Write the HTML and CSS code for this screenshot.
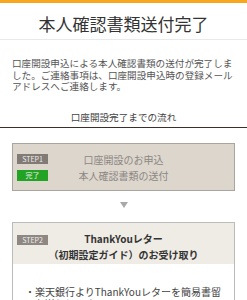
FILE: index.html
```html
<!DOCTYPE html>
<html lang="ja">
<head>
    <meta charset="UTF-8">
    <meta name="viewport" content="width=device-width, initial-scale=1.0">
    <title>本人確認書類送付完了</title>
    <link rel="stylesheet" href="styles.css">
</head>
<body>

<div class="topbar"></div>

<div class="header">
    <h1>本人確認書類送付完了</h1>
</div>

<p class="intro">口座開設申込による本人確認書類の送付が完了しました。ご連絡事項は、口座開設申込時の登録メールアドレスへご連絡します。</p>

<h2 class="flowTitle">口座開設完了までの流れ</h2>

<div class="step done">
    <div class="stepRow">
        <span class="badge gray">STEP1</span>
        <span class="stepText">口座開設のお申込</span>
        <span></span>
    </div>
    <div class="stepRow">
        <span class="badge green">完了</span>
        <span class="stepText">本人確認書類の送付</span>
        <span></span>
    </div>
</div>

<div class="arrow"></div>

<div class="step next">
    <div class="stepHead">
        <span class="badge gray">STEP2</span>
        <span class="stepTitle">ThankYouレター<br>（初期設定ガイド）のお受け取り</span>
        <span></span>
    </div>
    <div class="stepBody">
        <p>・楽天銀行よりThankYouレターを簡易書留でお送りします。</p>
    </div>
</div>

</body>
</html>
```

FILE: styles.css
```css
body {
    font-family: "Noto Sans CJK JP", "Noto Sans", sans-serif;
    background-color: #fff;
    color: #444;
    margin: 0;
    padding: 0;
}

.topbar {
    height: 3px;
    background-color: #f6a71d;
}

.header {
    padding-top: 6px;
    border-bottom: 1px solid #e9e9e9;
}

.header h1 {
    margin: 0;
    font-size: 17px;
    font-weight: normal;
    line-height: 30px;
    text-align: center;
    color: #333;
}

.intro {
    margin: 18px 12px 0;
    font-size: 9.6px;
    line-height: 11.6px;
    color: #555;
}

.flowTitle {
    margin: 18px 0 0;
    padding-bottom: 4px;
    font-size: 9.6px;
    font-weight: normal;
    line-height: 12px;
    text-align: center;
    color: #444;
    border-bottom: 1.5px solid #3d2f27;
}

.step {
    margin: 15px 12px 0;
    border: 1px solid #aaa49e;
}

.step.done {
    background-color: #ddd6cd;
    padding: 10px 4px 9px;
}

.stepRow {
    display: grid;
    grid-template-columns: 31px 1fr 31px;
    align-items: center;
    height: 11px;
    margin-bottom: 5px;
}

.stepRow:last-child {
    margin-bottom: 0;
}

.stepText {
    font-size: 10px;
    text-align: center;
    color: #8c8783;
    line-height: 11px;
}

.badge {
    display: block;
    height: 10px;
    font-size: 7px;
    line-height: 10px;
    text-align: center;
    color: #eee;
}

.badge.gray {
    background-color: #817a75;
}

.badge.green {
    background-color: #23a323;
    height: 11px;
    line-height: 11px;
}

.arrow {
    width: 0;
    height: 0;
    margin: 11px auto 0;
    border-left: 4px solid transparent;
    border-right: 4px solid transparent;
    border-top: 6px solid #a9a9a9;
}

.step.next {
    margin-top: 14px;
    border-color: #bbb;
}

.stepHead {
    display: grid;
    grid-template-columns: 31px 1fr 31px;
    align-items: start;
    padding: 8px 4px 1px;
    background-color: #efebe5;
}

.stepHead .badge {
    margin-top: 4px;
    background-color: #8e8782;
}

.stepTitle {
    font-size: 10px;
    font-weight: bold;
    line-height: 16px;
    text-align: center;
    white-space: nowrap;
    color: #333;
}

.stepBody {
    padding: 22px 12px 10px;
}

.stepBody p {
    margin: 0;
    font-size: 10px;
    line-height: 12px;
    color: #444;
}
```
